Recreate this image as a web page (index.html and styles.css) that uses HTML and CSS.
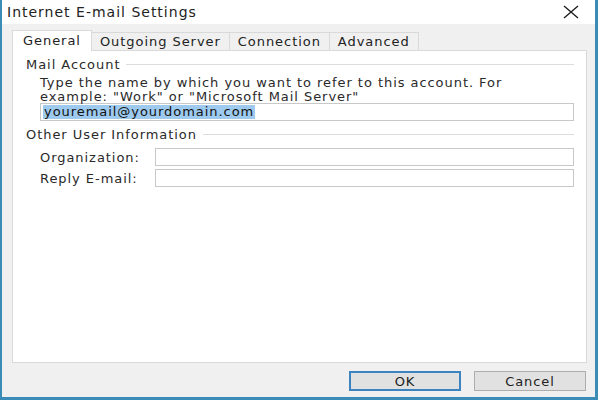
FILE: index.html
```html
<!DOCTYPE html>
<html>
<head>
<meta charset="utf-8">
<link rel="stylesheet" href="styles.css">
</head>
<body>
<div class="window">
  <div class="titlebar">
    <span class="title">Internet E-mail Settings</span>
    <svg class="close" width="18" height="14" viewBox="0 0 18 14"><path d="M2 1 L16 13 M16 1 L2 13" stroke="#1a1a1a" stroke-width="1.3" fill="none"/></svg>
  </div>
  <div class="client">
    <div class="tabs">
      <div class="tab active">General</div>
      <div class="tab">Outgoing Server</div>
      <div class="tab">Connection</div>
      <div class="tab">Advanced</div>
    </div>
    <div class="panel">
      <div class="group-head"><span>Mail Account</span><div class="rule"></div></div>
      <div class="indent">
        <p class="desc">Type the name by which you want to refer to this account. For<br>example: "Work" or "Microsoft Mail Server"</p>
        <div class="input wide"><span class="sel">youremail@yourdomain.com</span></div>
      </div>
      <div class="group-head second"><span>Other User Information</span><div class="rule"></div></div>
      <div class="indent">
        <div class="row"><label>Organization:</label><div class="input"></div></div>
        <div class="row"><label>Reply E-mail:</label><div class="input"></div></div>
      </div>
    </div>
    <div class="footer">
      <div class="btn default">OK</div>
      <div class="btn">Cancel</div>
    </div>
  </div>
</div>
</body>
</html>
```
FILE: styles.css
```css
html, body { margin: 0; padding: 0; background: #fff; }
body { font-family: "DejaVu Sans", sans-serif; font-size: 13px; letter-spacing: 0.95px; color: #2a2a2a; }
.window {
  width: 598px; height: 400px; box-sizing: border-box;
  border-left: 2px solid #3a8bb5; border-right: 3px solid #3a8bb5; border-bottom: 3px solid #3a8bb5;
  display: flex; flex-direction: column; background: #f0f0f0;
}
.titlebar {
  height: 24px; background: #fff; display: flex; align-items: center;
  justify-content: space-between; padding: 0 15px 0 5px;
}
.title { font-size: 14px; letter-spacing: 1px; color: #222; }
.client { flex: 1; display: flex; flex-direction: column; padding: 6px 8px 0 10px; }
.tabs { display: flex; align-items: flex-end; height: 20px; }
.tab {
  height: 17px; line-height: 17px; padding: 0 8px; border: 1px solid #d9d9d9; border-bottom: none;
  background: #f0f0f0; margin-left: -1px; color: #222;
}
.tab.active { height: 20px; line-height: 19px; background: #fff; padding: 0 10px; margin-left: 0; position: relative; z-index: 1; margin-bottom: -1px; }
.panel {
  height: 313px; box-sizing: border-box; background: #fff; border: 1px solid #d9d9d9;
  padding: 5px 12px 0 13px;
}
.group-head { display: flex; align-items: center; gap: 6px; height: 16px; }
.group-head .rule { flex: 1; border-top: 1px solid #dcdcdc; }
.group-head.second { margin-top: 5px; }
.indent { padding-left: 14px; }
.desc { margin: 4px 0 0 0; line-height: 14px; }
.input { height: 18px; box-sizing: border-box; border: 1px solid #c8c8c8; background: #fff; flex: 1; display: flex; align-items: center; padding-left: 2px; }
.input.wide { margin-top: -1px; }
.sel { background: #9dcaee; color: #111; line-height: 14px; padding: 0 1px; }
.row { display: flex; align-items: center; margin-top: 3px; }
.row:first-child { margin-top: 6px; }
.row label { width: 115px; }
.footer { display: flex; justify-content: flex-end; gap: 13px; padding: 8px 1px 0 0; }
.btn {
  width: 112px; height: 20px; box-sizing: border-box; border: 1px solid #adadad; background: #e1e1e1;
  display: flex; align-items: center; justify-content: center; color: #222;
}
.btn.default { border: 2px solid #3c83c0; }
```
